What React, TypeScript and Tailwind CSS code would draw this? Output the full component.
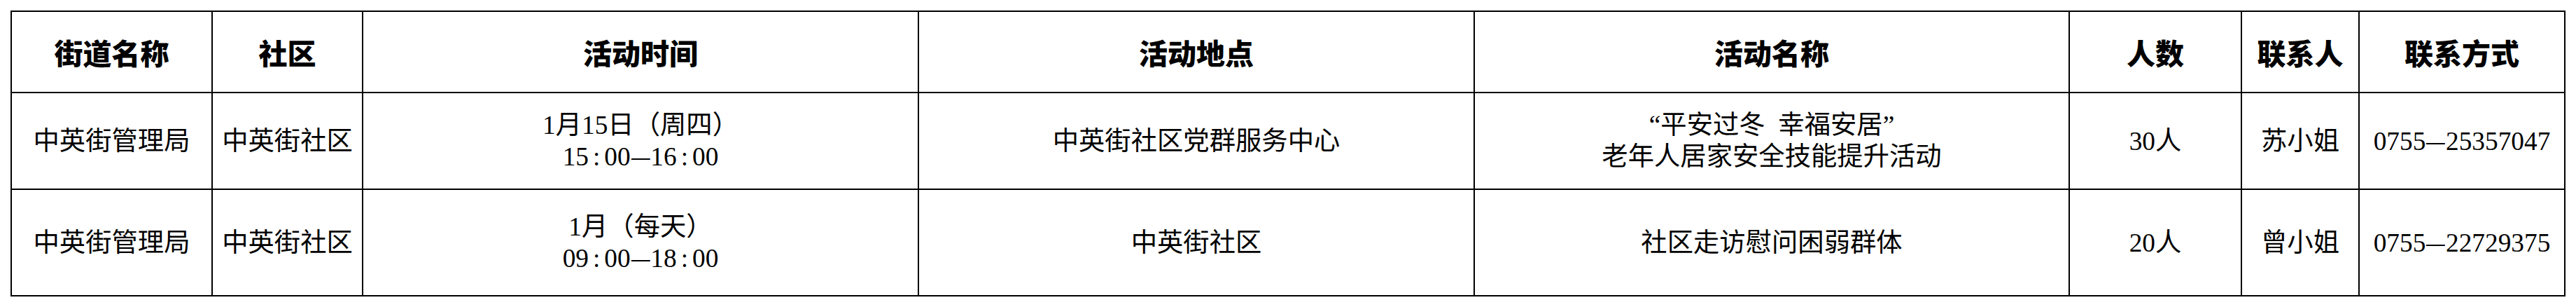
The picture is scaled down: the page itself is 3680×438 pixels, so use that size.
import React from "react";

const body = "font-['Liberation_Serif','Noto_Sans_CJK_SC',serif] text-[37.33px] leading-[45px] text-black font-normal";
const head = "font-['Noto_Sans_CJK_SC',sans-serif] text-[41px] leading-[50px] text-black font-black";

function Cell({ children, className = "" }: { children: React.ReactNode; className?: string }) {
  return (
    <div className={`bg-white flex flex-col items-center justify-center text-center whitespace-pre ${className}`}>
      {children}
    </div>
  );
}

function Dash() {
  return <span className="inline-block scale-x-[1.4] mx-[5px]">–</span>;
}

function Time({ a, b }: { a: [string, string]; b: [string, string] }) {
  return (
    <span>
      {a[0]}
      <span className="mx-[6px]">:</span>
      {a[1]}
      <Dash />
      {b[0]}
      <span className="mx-[6px]">:</span>
      {b[1]}
    </span>
  );
}

function Phone({ n }: { n: string }) {
  return (
    <span>
      0755
      <Dash />
      {n}
    </span>
  );
}

export default function App() {
  const headers = ["街道名称", "社区", "活动时间", "活动地点", "活动名称", "人数", "联系人", "联系方式"];
  return (
    <div className="w-[3680px] h-[438px] bg-white p-[15px]">
      <div className="grid grid-cols-[285px_213px_792px_792px_848px_244px_166px_292px] grid-rows-[114px_136px_150px] gap-[2px] p-[2px] bg-black w-[3650px]">
        {headers.map((h) => (
          <Cell key={h} className={head}>
            {h}
          </Cell>
        ))}

        <Cell className={body}>中英街管理局</Cell>
        <Cell className={body}>中英街社区</Cell>
        <Cell className={body}>
          <div>1月15日（周四）</div>
          <div>
            <Time a={["15", "00"]} b={["16", "00"]} />
          </div>
        </Cell>
        <Cell className={body}>中英街社区党群服务中心</Cell>
        <Cell className={body}>
          <div>“平安过冬  幸福安居”</div>
          <div>老年人居家安全技能提升活动</div>
        </Cell>
        <Cell className={body}>30人</Cell>
        <Cell className={body}>苏小姐</Cell>
        <Cell className={body}>
          <Phone n="25357047" />
        </Cell>

        <Cell className={body}>中英街管理局</Cell>
        <Cell className={body}>中英街社区</Cell>
        <Cell className={body}>
          <div>1月（每天）</div>
          <div>
            <Time a={["09", "00"]} b={["18", "00"]} />
          </div>
        </Cell>
        <Cell className={body}>中英街社区</Cell>
        <Cell className={body}>社区走访慰问困弱群体</Cell>
        <Cell className={body}>20人</Cell>
        <Cell className={body}>曾小姐</Cell>
        <Cell className={body}>
          <Phone n="22729375" />
        </Cell>
      </div>
    </div>
  );
}
